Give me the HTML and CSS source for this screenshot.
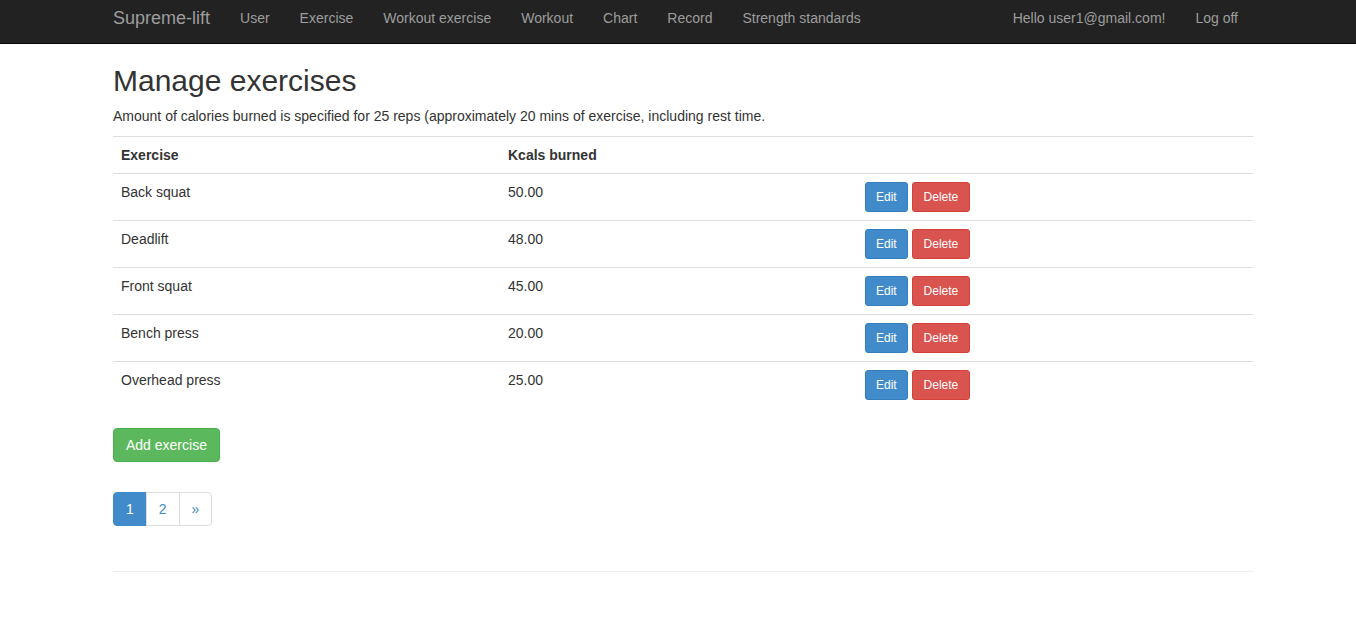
FILE: index.html
```html
<!DOCTYPE html>
<html>
<head>
<meta charset="utf-8">
<title>Manage exercises</title>
<link rel="stylesheet" href="styles.css">
</head>
<body>
<nav class="navbar">
  <div class="nav-inner">
    <a class="brand" href="#">Supreme-lift</a>
    <ul class="nav">
      <li><a href="#">User</a></li>
      <li><a href="#">Exercise</a></li>
      <li><a href="#">Workout exercise</a></li>
      <li><a href="#">Workout</a></li>
      <li><a href="#">Chart</a></li>
      <li><a href="#">Record</a></li>
      <li><a href="#">Strength standards</a></li>
    </ul>
    <ul class="nav nav-right">
      <li><a href="#">Hello user1@gmail.com!</a></li>
      <li><a href="#">Log off</a></li>
    </ul>
  </div>
</nav>
<main class="container">
  <h2 class="title">Manage exercises</h2>
  <p class="lead-text">Amount of calories burned is specified for 25 reps (approximately 20 mins of exercise, including rest time.</p>
  <table class="table">
    <tr>
      <th class="col-ex">Exercise</th>
      <th class="col-kc">Kcals burned</th>
      <th></th>
    </tr>
    <tr>
      <td>Back squat</td><td>50.00</td>
      <td><a class="btn btn-sm btn-primary" href="#">Edit</a> <a class="btn btn-sm btn-danger" href="#">Delete</a></td>
    </tr>
    <tr>
      <td>Deadlift</td><td>48.00</td>
      <td><a class="btn btn-sm btn-primary" href="#">Edit</a> <a class="btn btn-sm btn-danger" href="#">Delete</a></td>
    </tr>
    <tr>
      <td>Front squat</td><td>45.00</td>
      <td><a class="btn btn-sm btn-primary" href="#">Edit</a> <a class="btn btn-sm btn-danger" href="#">Delete</a></td>
    </tr>
    <tr>
      <td>Bench press</td><td>20.00</td>
      <td><a class="btn btn-sm btn-primary" href="#">Edit</a> <a class="btn btn-sm btn-danger" href="#">Delete</a></td>
    </tr>
    <tr>
      <td>Overhead press</td><td>25.00</td>
      <td><a class="btn btn-sm btn-primary" href="#">Edit</a> <a class="btn btn-sm btn-danger" href="#">Delete</a></td>
    </tr>
  </table>
  <div class="actions">
    <a class="btn btn-success" href="#">Add exercise</a>
  </div>
  <ul class="pagination">
    <li class="active"><span>1</span></li>
    <li><a href="#">2</a></li>
    <li><a href="#">&raquo;</a></li>
  </ul>
  <hr class="rule">
</main>
</body>
</html>
```

FILE: styles.css
```css
* { box-sizing: border-box; }
html, body { margin: 0; padding: 0; }
body {
  font-family: "Liberation Sans", Arial, Helvetica, sans-serif;
  font-size: 14px;
  line-height: 20px;
  color: #333;
  background: #fff;
}
a { text-decoration: none; }

.navbar {
  background: #222;
  border-bottom: 1px solid #080808;
  height: 44px;
}
.nav-inner {
  width: 1155px;
  margin-left: 98px;
  display: flex;
  align-items: flex-start;
  height: 43px;
}
.brand {
  color: #9d9d9d;
  font-size: 18px;
  line-height: 20px;
  padding: 8px 15px;
}
.nav {
  list-style: none;
  margin: 0;
  padding: 0;
  display: flex;
}
.nav a {
  display: block;
  color: #9d9d9d;
  padding: 8px 15px;
  line-height: 20px;
}
.nav-right { margin-left: auto; }

.container {
  width: 1140px;
  margin-left: 113px;
}
.title {
  font-size: 30px;
  font-weight: 500;
  line-height: 33px;
  margin: 20px 0 9px;
}
.lead-text {
  margin: 0 0 10px;
}
.table {
  width: 100%;
  border-collapse: collapse;
  border-spacing: 0;
  margin-bottom: 20px;
}
.table th, .table td {
  text-align: left;
  vertical-align: top;
  padding: 8px;
  line-height: 20px;
  border-top: 1px solid #ddd;
}
.table th { font-weight: bold; }
.col-ex { width: 387px; }
.col-kc { width: 357px; }

.btn {
  display: inline-block;
  border: 1px solid transparent;
  border-radius: 4px;
  color: #fff;
  font-size: 14px;
  line-height: 20px;
  padding: 6px 12px;
  vertical-align: middle;
}
.btn-sm {
  font-size: 12px;
  line-height: 18px;
  padding: 5px 10px;
  border-radius: 3px;
}
.btn-primary { background: #428bca; border-color: #357ebd; }
.btn-danger { background: #d9534f; border-color: #d43f3a; padding: 5px 11px; }
.btn-success { background: #5cb85c; border-color: #4cae4c; }

.actions { margin: 0; }

.pagination {
  list-style: none;
  display: flex;
  padding: 0;
  margin: 30px 0 0;
}
.pagination li > a, .pagination li > span {
  display: block;
  padding: 6px 12px;
  line-height: 20px;
  color: #428bca;
  background: #fff;
  border: 1px solid #ddd;
  margin-left: -1px;
}
.pagination li:first-child > * {
  margin-left: 0;
  border-radius: 4px 0 0 4px;
}
.pagination li:last-child > * {
  border-radius: 0 4px 4px 0;
}
.pagination li.active > span {
  background: #428bca;
  border-color: #428bca;
  color: #fff;
}
.rule {
  border: 0;
  border-top: 1px solid #eee;
  margin: 45px 0 20px;
}
```
